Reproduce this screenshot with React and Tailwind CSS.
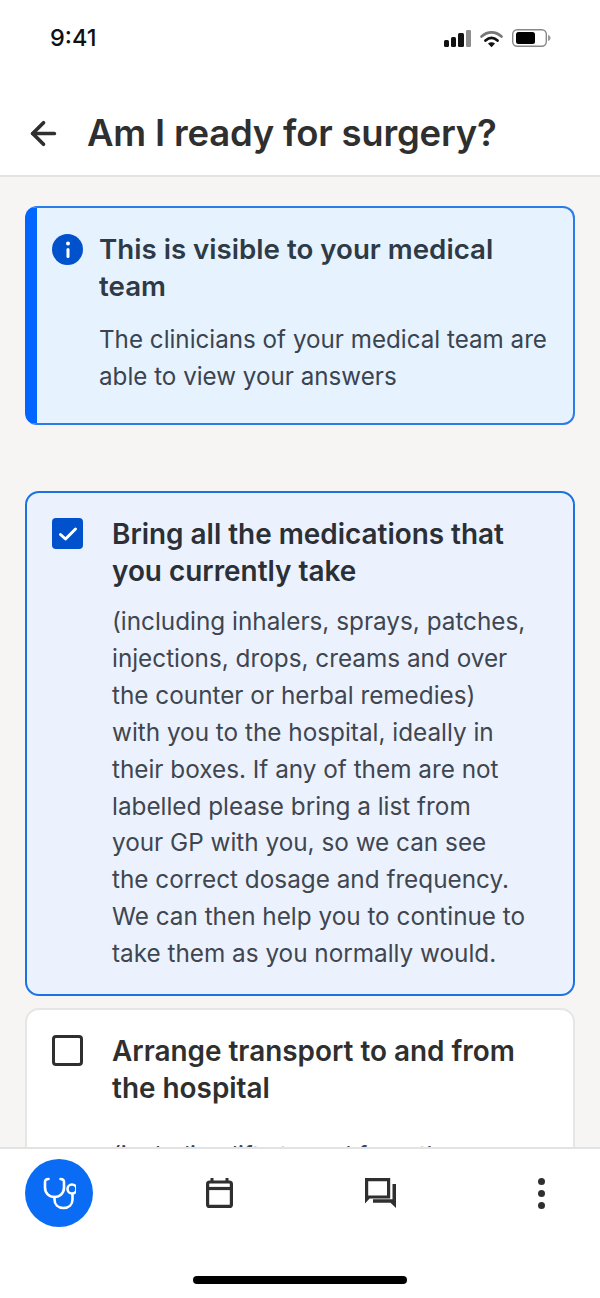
import { ArrowLeft } from "lucide-react";

function StatusIcons() {
  return (
    <svg width="108" height="22" viewBox="0 0 108 22" fill="none">
      <rect x="0" y="12" width="5" height="7" rx="1.500" fill="#111" />
      <rect x="7" y="9" width="5" height="10" rx="1.500" fill="#111" />
      <rect x="14" y="5" width="6" height="14" rx="1.500" fill="#111" />
      <rect x="22" y="2" width="5" height="17" rx="1.200" fill="#8e8e8e" />
      <path d="M37.500 8.500c6-5.500 14-5.500 20 0" stroke="#777" strokeWidth="2.600" strokeLinecap="round" />
      <path d="M41.500 12.500c3.800-3.300 8.200-3.300 12 0" stroke="#111" strokeWidth="2.800" strokeLinecap="round" />
      <path d="M44 15.500c2.200-1.700 4.800-1.700 7 0l-3.500 3.800z" fill="#111" />
      <rect x="68.700" y="1.700" width="33.600" height="16.600" rx="4.500" stroke="#888" strokeWidth="1.400" />
      <rect x="72" y="4" width="19" height="12" rx="2.500" fill="#000" />
      <path d="M104 7c1.800.5 2.500 1.600 2.500 3s-.7 2.500-2.500 3z" fill="#999" />
    </svg>
  );
}

function Checkbox({ checked }) {
  if (checked) {
    return (
      <div className="flex h-[31px] w-[31px] shrink-0 items-center justify-center rounded-[4px] bg-[#0052cc]">
        <svg width="20" height="16" viewBox="0 0 20 16" fill="none">
          <path d="M2.500 8.500l5 4.500 10-10" stroke="#fff" strokeWidth="3" strokeLinecap="round" strokeLinejoin="round" />
        </svg>
      </div>
    );
  }
  return <div className="h-[31px] w-[31px] shrink-0 rounded-[4px] border-[3px] border-[#2f2f2f] bg-white" />;
}

function Stethoscope() {
  return (
    <svg width="33" height="33" viewBox="0 0 33 33" fill="none" stroke="#fff" strokeWidth="2.600" strokeLinecap="round" strokeLinejoin="round">
      <path d="M5.500 2C3.200 2 2 3.200 2 5v5.500C2 16 6 20 11.500 20S21 16 21 10.500V5c0-1.800-1.200-3-3.500-3" />
      <path d="M11.500 20v2.500c0 5 3.500 8.500 9 8.500s9-3.500 9-8.500V17" />
      <circle cx="29" cy="12" r="4.500" />
    </svg>
  );
}

function CalendarIcon() {
  return (
    <svg width="27" height="30" viewBox="0 0 27 30" fill="none" stroke="#2f2f2f" strokeWidth="3.200">
      <rect x="1.600" y="4" width="23.800" height="24.400" rx="2" />
      <path d="M1.600 10.500h23.800" />
      <path d="M6 0v4M21 0v4" strokeWidth="3" />
    </svg>
  );
}

function ChatIcon() {
  return (
    <svg width="31" height="30" viewBox="0 0 31 30" fill="none">
      <path d="M1.600 21.500V1.600h22v17.400H4z" stroke="#2f2f2f" strokeWidth="3.200" />
      <path d="M27.500 6h3.500v24l-5.500-5.200H8v-3.500h19.500z" fill="#2f2f2f" />
    </svg>
  );
}

function Dots() {
  return (
    <div className="flex flex-col items-center gap-[5px]">
      <div className="h-[7px] w-[7px] rounded-full bg-[#2f2f2f]" />
      <div className="h-[7px] w-[7px] rounded-full bg-[#2f2f2f]" />
      <div className="h-[7px] w-[7px] rounded-full bg-[#2f2f2f]" />
    </div>
  );
}

export default function App() {
  return (
    <div className="flex h-[1298px] w-[600px] flex-col overflow-hidden bg-white font-['Inter','Noto_Sans',sans-serif]">
      <div className="flex h-[75px] shrink-0 items-start justify-between pl-[50px] pr-[48px] pt-[24px]">
        <span className="text-[23.500px] font-medium leading-[28px] text-[#111]">9:41</span>
        <div className="pt-[4px]">
          <StatusIcons />
        </div>
      </div>

      <div className="flex h-[102px] shrink-0 items-center gap-[25px] border-b-2 border-[#e3e3e3] pl-[25px] pt-[17px]">
        <ArrowLeft size={37} strokeWidth={2.400} color="#2f2f2f" />
        <h1 className="text-[36.500px] font-semibold tracking-[-0.2px] text-[#2f2f2f]">Am I ready for surgery?</h1>
      </div>

      <div className="flex min-h-0 flex-1 flex-col overflow-hidden bg-[#f6f5f3] px-[25px] pt-[29px]">
        <div className="flex shrink-0 gap-[16px] rounded-[12px] border-2 border-l-[12px] border-[#2a7de8] border-l-[#0066ff] bg-[#e7f2ff] pb-[28px] pl-[15px] pr-[18px] pt-[23px]">
          <div className="mt-[3px] flex h-[31px] w-[31px] shrink-0 items-center justify-center rounded-full bg-[#0052cc]">
            <svg width="6" height="18" viewBox="0 0 6 18" fill="#fff">
              <circle cx="3" cy="2.500" r="2" />
              <rect x="1.500" y="7" width="3" height="10" rx="1.500" />
            </svg>
          </div>
          <div>
            <h2 className="text-[27.700px] font-semibold leading-[37px] text-[#2e3a46]">This is visible to your medical team</h2>
            <p className="mt-[16px] text-[24.200px] leading-[37px] text-[#3a4450]">
              The clinicians of your medical team are able to view your answers
            </p>
          </div>
        </div>

        <div className="mt-[66px] flex shrink-0 gap-[29px] rounded-[14px] border-2 border-[#1a73e0] bg-[#ebf2fe] pb-[22px] pl-[25px] pr-[19px] pt-[23px]">
          <div className="pt-[2px]">
            <Checkbox checked />
          </div>
          <div>
            <h2 className="text-[27.900px] font-semibold leading-[37px] text-[#2b2f36]">
              Bring all the medications that
              <br />
              you currently take
            </h2>
            <p className="mt-[13px] text-[24.300px] leading-[36.900px] text-[#3f4650]">
              (including inhalers, sprays, patches,
              <br />
              injections, drops, creams and over
              <br />
              the counter or herbal remedies)
              <br />
              with you to the hospital, ideally in
              <br />
              their boxes. If any of them are not
              <br />
              labelled please bring a list from
              <br />
              your GP with you, so we can see
              <br />
              the correct dosage and frequency.
              <br />
              We can then help you to continue to
              <br />
              take them as you normally would.
            </p>
          </div>
        </div>

        <div className="mt-[12px] flex shrink-0 gap-[29px] rounded-[14px] border-2 border-[#e6e6e6] bg-white pb-[24px] pl-[25px] pr-[19px] pt-[23px]">
          <div className="pt-[2px]">
            <Checkbox />
          </div>
          <div>
            <h2 className="text-[27.900px] font-semibold leading-[37px] text-[#2f2f2f]">
              Arrange transport to and from
              <br />
              the hospital
            </h2>
            <p className="mt-[30px] text-[24.300px] leading-[36.900px] text-[#3f4650]">(including lifts to and from the hospital)</p>
          </div>
        </div>
      </div>

      <div className="flex h-[151px] shrink-0 flex-col border-t-2 border-[#e3e3e3] bg-white">
        <div className="flex items-center pl-[25px] pt-[10px]">
          <div className="flex h-[68px] w-[68px] items-center justify-center rounded-full bg-[#0a6cf5]">
            <Stethoscope />
          </div>
          <div className="ml-[113px]">
            <CalendarIcon />
          </div>
          <div className="ml-[132px]">
            <ChatIcon />
          </div>
          <div className="ml-[142px]">
            <Dots />
          </div>
        </div>
        <div className="mt-[49px] h-[8px] w-[214px] self-center rounded-full bg-black" />
      </div>
    </div>
  );
}
